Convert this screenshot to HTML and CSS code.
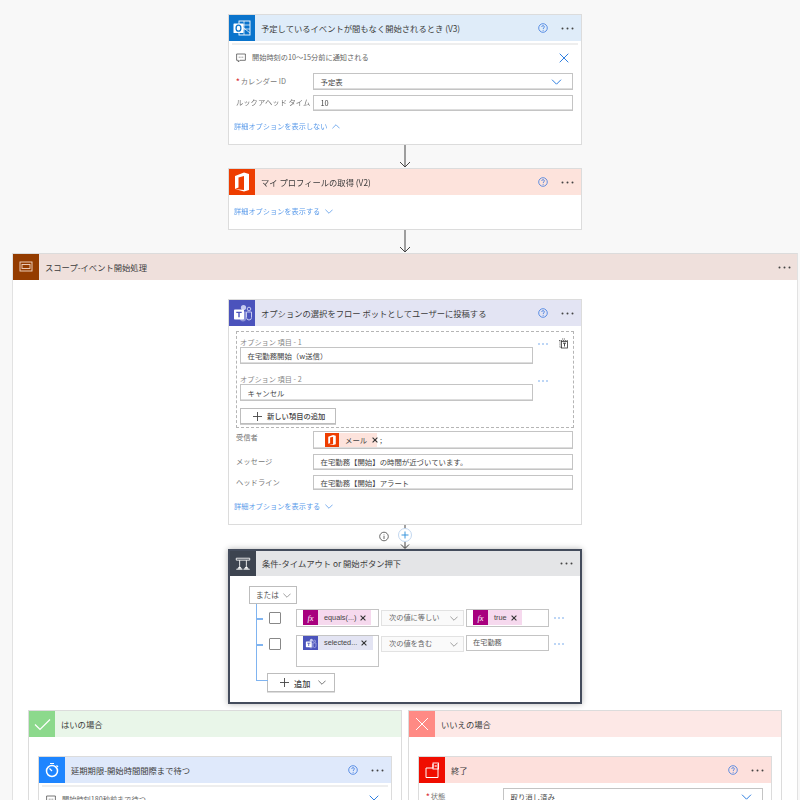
FILE: index.html
```html
<!DOCTYPE html>
<html lang="ja">
<head>
<meta charset="utf-8">
<title>フロー デザイナー</title>
<link rel="stylesheet" href="styles.css">
</head>
<body>
<svg class="defs" width="0" height="0">
  <symbol id="help" viewBox="0 0 10 10"><circle cx="5" cy="5" r="4.3" fill="none" stroke="#3b79e0" stroke-width=".8"/><path d="M3.7 3.9c0-1.7 2.7-1.7 2.7 0 0 1-1.3 1-1.3 2.1" fill="none" stroke="#3b79e0" stroke-width=".8"/><circle cx="5.1" cy="7.3" r=".5" fill="#3b79e0"/></symbol>
  <symbol id="dots" viewBox="0 0 13 3"><circle cx="1.5" cy="1.5" r="1" fill="#444"/><circle cx="6.5" cy="1.5" r="1" fill="#444"/><circle cx="11.5" cy="1.5" r="1" fill="#444"/></symbol>
  <symbol id="bdots" viewBox="0 0 10 2"><circle cx="1" cy="1" r=".7" fill="#4a8fe7"/><circle cx="5" cy="1" r=".7" fill="#4a8fe7"/><circle cx="9" cy="1" r=".7" fill="#4a8fe7"/></symbol>
  <symbol id="chev" viewBox="0 0 10 6"><path d="M.5.7 5 5.2 9.500.7" fill="none" stroke="currentColor" stroke-width="1"/></symbol>
  <symbol id="cross" viewBox="0 0 10 10"><path d="M.7.7l8.600 8.600M9.300.7.700 9.300" fill="none" stroke="currentColor" stroke-width="1"/></symbol>
  <symbol id="x" viewBox="0 0 10 10"><path d="M1 1l8 8M9 1 1 9" fill="none" stroke="#333" stroke-width="1.800"/></symbol>
  <symbol id="plus" viewBox="0 0 10 10"><path d="M5 0v10M0 5h10" fill="none" stroke="currentColor" stroke-width="1"/></symbol>
  <symbol id="note" viewBox="0 0 10 10"><path d="M.6 1h8.800v6.300H4L2.300 9V7.300H.6z" fill="none" stroke="#555" stroke-width=".8"/><path d="M2.800 4.200h.8M4.600 4.200h.8M6.400 4.200h.8" stroke="#555" stroke-width=".9"/></symbol>
  <symbol id="office" viewBox="0 0 26 26"><path d="M6 20V7l9-3.500 5 1.500v16l-5 1.500L6 20l9 1V7l-5.500 1.500V18.500z" fill="#fff"/></symbol>
  <symbol id="teams" viewBox="0 0 26 26"><circle cx="14.500" cy="7.500" r="2.600" fill="#c5c9ef"/><circle cx="20" cy="9" r="1.800" fill="none" stroke="#c5c9ef"/><path d="M17.500 12h5v5.500a2.500 2.500 0 0 1-5 0z" fill="none" stroke="#c5c9ef"/><path d="M11 11.500h6v7a3 3 0 0 1-6 0z" fill="#8d93d8"/><rect x="5" y="9.500" width="10" height="10" rx=".8" fill="#fff"/><path d="M7.300 11.800h5.400v1.300h-2v4.200H9.300v-4.200h-2z" fill="#4b53bc"/></symbol>
</svg>

<main class="canvas">
  <section class="card card-outlook">
    <header class="head head-outlook">
      <div class="ico ico-outlook">
        <svg width="26" height="26" viewBox="0 0 26 26"><rect x="10" y="6" width="11" height="14" fill="none" stroke="#fff" stroke-width=".9"/><path d="M10 10h11M10 14h11M15 6v14M11 10l10 8" stroke="#fff" stroke-width=".7" fill="none"/><rect x="4.500" y="8.500" width="10" height="9.500" rx=".6" fill="#fff"/><ellipse cx="9.500" cy="13.200" rx="2.400" ry="3" fill="none" stroke="#0a74cc" stroke-width="1.300"/></svg>
      </div>
      <h2 class="title">予定しているイベントが間もなく開始されるとき (V3)</h2>
      <svg class="help"><use href="#help"/></svg>
      <svg class="more"><use href="#dots"/></svg>
    </header>
    <div class="body body-outlook">
      <div class="rule"></div>
      <div class="notice">
        <svg class="note"><use href="#note"/></svg>
        <span>開始時刻の10〜15分前に通知される</span>
        <svg class="close"><use href="#cross"/></svg>
      </div>
      <div class="fields fields-outlook">
        <label class="lab"><b>*</b>カレンダー ID</label>
        <div class="inp h18 dd">予定表<svg class="chev-b"><use href="#chev"/></svg></div>
        <label class="lab">ルックアヘッド タイム</label>
        <div class="inp h15">10</div>
      </div>
      <a class="more-link link-a">詳細オプションを表示しない<svg class="chev-l up"><use href="#chev"/></svg></a>
    </div>
  </section>

  <div class="arrow"><svg width="14" height="23" viewBox="0 0 14 23"><path d="M7 0v22M2 17l5 5 5-5" fill="none" stroke="#444" stroke-width="1"/></svg></div>

  <section class="card card-profile">
    <header class="head head-office">
      <div class="ico ico-office"><svg width="26" height="26"><use href="#office"/></svg></div>
      <h2 class="title">マイ プロフィールの取得 (V2)</h2>
      <svg class="help"><use href="#help"/></svg>
      <svg class="more"><use href="#dots"/></svg>
    </header>
    <div class="body body-profile">
      <a class="more-link">詳細オプションを表示する<svg class="chev-l"><use href="#chev"/></svg></a>
    </div>
  </section>

  <div class="arrow"><svg width="14" height="23" viewBox="0 0 14 23"><path d="M7 0v22M2 17l5 5 5-5" fill="none" stroke="#444" stroke-width="1"/></svg></div>

  <section class="scope">
    <header class="head head-scope">
      <div class="ico ico-scope"><svg width="26" height="26" viewBox="0 0 26 26"><rect x="7" y="8" width="12" height="9" fill="none" stroke="#f4d9c8" stroke-width=".9"/><rect x="9" y="10.500" width="8" height="4" fill="none" stroke="#f4d9c8" stroke-width=".9"/></svg></div>
      <h2 class="title">スコープ-イベント開始処理</h2>
      <svg class="more"><use href="#dots"/></svg>
    </header>
    <div class="scope-body">
      <section class="card card-teams">
        <header class="head head-teams">
          <div class="ico ico-teams"><svg width="26" height="26"><use href="#teams"/></svg></div>
          <h2 class="title">オプションの選択をフロー ボットとしてユーザーに投稿する</h2>
          <svg class="help"><use href="#help"/></svg>
          <svg class="more"><use href="#dots"/></svg>
        </header>
        <div class="body body-teams">
          <div class="options">
            <div class="opt">
              <div class="opt-main">
                <span class="opt-lab">オプション 項目 - 1</span>
                <div class="inp h17">在宅勤務開始（w送信）</div>
              </div>
              <svg class="bd bd1"><use href="#bdots"/></svg>
              <svg class="trash" width="11" height="11" viewBox="0 0 11 11"><path d="M1 2.500h9M2 2.500V9.500h2M4 1h3" fill="none" stroke="#444" stroke-width=".8" stroke-dasharray="1.200 .7"/><rect x="3.500" y="3.500" width="6" height="6.500" fill="#fff" stroke="#333" stroke-width=".8"/><path d="M5 5.200h3M6.500 5.200v3.300" stroke="#333" stroke-width=".9"/></svg>
            </div>
            <div class="opt opt2">
              <div class="opt-main">
                <span class="opt-lab">オプション 項目 - 2</span>
                <div class="inp h17">キャンセル</div>
              </div>
              <svg class="bd bd2"><use href="#bdots"/></svg>
            </div>
            <button class="add-item"><svg class="plus-a"><use href="#plus"/></svg>新しい項目の追加</button>
          </div>
          <div class="fields fields-teams">
            <label class="lab lab-top">受信者</label>
            <div class="inp h19 tokens">
              <span class="chip chip-office"><span class="chip-ico bg-office"><svg width="14" height="14" viewBox="0 0 26 26"><use href="#office"/></svg></span><span class="chip-text">メール</span><svg class="chip-x"><use href="#x"/></svg></span><span class="semi">;</span>
            </div>
            <label class="lab">メッセージ</label>
            <div class="inp h16">在宅勤務【開始】の時間が近づいています。</div>
            <label class="lab">ヘッドライン</label>
            <div class="inp h16">在宅勤務【開始】アラート</div>
          </div>
          <a class="more-link link-t">詳細オプションを表示する<svg class="chev-l"><use href="#chev"/></svg></a>
        </div>
      </section>

      <div class="connector">
        <svg width="60" height="24" viewBox="0 0 60 24"><path d="M39 0v23M35 19.500l4 4 4-4" fill="none" stroke="#444" stroke-width="1"/><circle cx="18" cy="11.500" r="4.300" fill="#fff" stroke="#444" stroke-width=".8"/><path d="M18 9.500v.8M18 11v3" stroke="#444" stroke-width=".8"/><circle cx="39" cy="10" r="6.500" fill="#fff" stroke="#c3d8f0"/><path d="M39 6.500v7M35.500 10h7" stroke="#3a96dd" stroke-width="1"/></svg>
      </div>

      <section class="card card-cond">
        <header class="head head-cond">
          <div class="ico ico-cond"><svg width="26" height="25" viewBox="0 0 26 26"><path d="M6 7.500h14v2H6zM9.500 9.500v6M16.500 9.500v6M6 19h6.500M13.500 19H20" fill="none" stroke="#fff" stroke-width=".9"/><path d="M7 18.500l2.500-3 2.500 3zM14 18.500l2.500-3 2.500 3z" fill="#fff"/></svg></div>
          <h2 class="title">条件-タイムアウト or 開始ボタン押下</h2>
          <svg class="more"><use href="#dots"/></svg>
        </header>
        <div class="body body-cond">
          <div class="or-select">または<svg class="chev-g"><use href="#chev"/></svg></div>
          <div class="tree">
            <div class="cond-row">
              <span class="check"></span>
              <div class="box b-left">
                <span class="chip chip-fx"><span class="chip-ico bg-fx"><i class="fx">fx</i></span><span class="chip-text en">equals(...)</span><svg class="chip-x"><use href="#x"/></svg></span>
              </div>
              <div class="select">次の値に等しい<svg class="chev-g"><use href="#chev"/></svg></div>
              <div class="box b-right">
                <span class="chip chip-fx chip-true"><span class="chip-ico bg-fx"><i class="fx">fx</i></span><span class="chip-text en">true</span><svg class="chip-x"><use href="#x"/></svg></span>
              </div>
              <svg class="bd rowdots"><use href="#bdots"/></svg>
            </div>
            <div class="cond-row row-2">
              <span class="check"></span>
              <div class="box b-left b-tall">
                <span class="chip chip-teams"><span class="chip-ico bg-teams"><svg width="15" height="15" viewBox="0 0 26 26"><use href="#teams"/></svg></span><span class="chip-text en">selected...</span><svg class="chip-x"><use href="#x"/></svg></span>
              </div>
              <div class="select">次の値を含む<svg class="chev-g"><use href="#chev"/></svg></div>
              <div class="box b-right b-text">在宅勤務</div>
              <svg class="bd rowdots"><use href="#bdots"/></svg>
            </div>
            <button class="add-cond"><svg class="plus-b"><use href="#plus"/></svg>追加<svg class="chev-g chev-add"><use href="#chev"/></svg></button>
          </div>
        </div>
      </section>

      <div class="branches">
        <section class="branch">
          <header class="head head-yes">
            <div class="ico ico-yes"><svg width="26" height="26" viewBox="0 0 26 26"><path d="M6 13.500l5 5 10-10" fill="none" stroke="#fff" stroke-width="1.200"/></svg></div>
            <h2 class="title">はいの場合</h2>
          </header>
          <div class="branch-body">
            <section class="card">
              <header class="head head-wait">
                <div class="ico ico-wait"><svg width="26" height="26" viewBox="0 0 26 26"><circle cx="13" cy="14" r="5.500" fill="none" stroke="#fff" stroke-width="1.500"/><path d="M11 6.500h4M13 14l-2.500-2.500M17.500 8.500l1.500 1.500" stroke="#fff" stroke-width="1.200" fill="none"/></svg></div>
                <h2 class="title">延期期限-開始時間間際まで待つ</h2>
                <svg class="help"><use href="#help"/></svg>
                <svg class="more"><use href="#dots"/></svg>
              </header>
              <div class="body">
                <div class="rule rule-wait"></div>
                <div class="notice notice-wait">
                  <svg class="note"><use href="#note"/></svg>
                  <span>開始時刻180秒前まで待つ</span>
                  <svg class="close"><use href="#cross"/></svg>
                </div>
              </div>
            </section>
          </div>
        </section>
        <section class="branch">
          <header class="head head-no">
            <div class="ico ico-no"><svg width="26" height="26" viewBox="0 0 26 26"><path d="M7 7l12 12M19 7 7 19" fill="none" stroke="#fff" stroke-width="1"/></svg></div>
            <h2 class="title">いいえの場合</h2>
          </header>
          <div class="branch-body">
            <section class="card">
              <header class="head head-end">
                <div class="ico ico-end"><svg width="26" height="26" viewBox="0 0 26 26"><path d="M7 11v9.500h12V7M7 11h7V7" fill="none" stroke="#fff" stroke-width="1"/><rect x="14" y="6" width="5.500" height="6" fill="none" stroke="#fff" stroke-width=".9"/><path d="M15.700 8l2 2M17.700 8l-2 2" stroke="#fff" stroke-width=".7"/></svg></div>
                <h2 class="title">終了</h2>
                <svg class="help"><use href="#help"/></svg>
                <svg class="more"><use href="#dots"/></svg>
              </header>
              <div class="body body-end">
                <div class="fields fields-end">
                  <label class="lab"><b>*</b>状態</label>
                  <div class="inp h18 dd">取り消し済み<svg class="chev-b"><use href="#chev"/></svg></div>
                </div>
              </div>
            </section>
          </div>
        </section>
      </div>
    </div>
  </section>
</main>
</body>
</html>
```
FILE: styles.css
```css
* { box-sizing: border-box; }
html, body { margin: 0; height: 800px; overflow: hidden; background: #f8f8f8; }
body { font-family: "Noto Sans CJK JP", "Noto Sans", sans-serif; color: #444; font-size: 7.4px; line-height: 1; }
.defs { position: absolute; }
svg { display: block; flex: none; }

.canvas { display: flex; flex-direction: column; align-items: center; width: 810px; padding-top: 14px; filter: blur(.3px); }

.card { width: 354px; background: #fff; border: 1px solid #dcdcdc; flex: none; }
.head { display: flex; align-items: center; height: 26px; }
.ico { width: 26px; height: 26px; flex: none; }
.title { margin: 0 0 0 6px; flex: 1; font-size: 8.3px; font-weight: 400; color: #3c3c3c; white-space: nowrap; }
.help { width: 10px; height: 10px; margin-right: 13px; }
.more { width: 13px; height: 3px; margin-right: 7px; }

.head-outlook { background: #dfecf9; }  .ico-outlook { background: #0a74cc; }
.head-office { background: #fde3dc; }   .ico-office { background: #ee3d00; }
.head-scope { background: #efe0dc; }    .ico-scope { background: #943c00; }
.head-teams { background: #e3e4f3; }    .ico-teams { background: #4b53bc; }
.head-cond { background: #e4e5e7; height: 25px; }  .ico-cond { background: #3d4450; height: 25px; }
.head-yes { background: #e9f6e9; }      .ico-yes { background: #8cd98c; }
.head-no { background: #fde8e6; }       .ico-no { background: #ff8a84; }
.head-wait { background: #dfe9fb; }     .ico-wait { background: #1e85ff; }
.head-end { background: #fde0dc; }      .ico-end { background: #f00d00; }

.rule { height: 2px; margin: 2px 3px 0; background: #eeeeee; }
.notice { display: flex; align-items: center; gap: 6px; margin: 6px 0 0 7px; height: 14px; color: #666; font-size: 7.2px; }
.notice span { flex: 1; }
.note { width: 10px; height: 10px; }
.close { width: 10px; height: 10px; color: #2f7fe0; margin-right: 12px; }

.body-outlook { height: 101px; }
.fields { display: grid; grid-template-columns: 77px 260px; align-items: center; margin-left: 7px; row-gap: 5px; }
.fields-outlook { margin-top: 8px; }
.lab { color: #777; font-size: 7.3px; white-space: nowrap; }
.lab b { color: #d9343a; font-weight: 700; margin-right: 1px; }
.lab-top { align-self: start; padding-top: 3px; }
.inp { display: flex; align-items: center; border: 1px solid #c4c4c4; box-shadow: inset 0 -1px 0 #ddd; padding-left: 6.5px; background: #fff; color: #444; font-size: 7.4px; }
.h15 { height: 15.5px; } .h16 { height: 15.5px; } .h17 { height: 17px; } .h18 { height: 17px; } .h19 { height: 18px; }
.dd { justify-content: space-between; padding-right: 10px; }
.chev-b { width: 11px; height: 6px; color: #2f7fe0; }

.more-link { display: flex; align-items: center; gap: 5px; color: #5b9bea; font-size: 7.2px; margin-left: 5px; }
.link-a { margin-top: 12px; }
.chev-l { width: 8px; height: 5px; color: #5b9bea; }
.up { transform: rotate(180deg); }

.body-profile { height: 34px; padding-top: 13px; }
.arrow { height: 23px; flex: none; }

.scope { width: 786px; flex: none; background: #fff; border-left: 1px solid #e2e2e2; border-right: 1px solid #e2e2e2; border-top: 1px solid #dcdcdc; }
.head-scope .title { margin-left: 6px; }
.head-scope .more { margin-right: 6px; }
.scope-body { display: flex; flex-direction: column; align-items: center; padding-top: 19px; }

.body-teams { height: 198px; padding-top: 5px; }
.options { margin: 0 7px; height: 97px; border: 1px dashed #b5b5b5; padding: 6px 3px 0; }
.opt { display: flex; position: relative; }
.opt2 { margin-top: 11px; }
.opt-main { width: 293px; }
.opt-lab { display: block; color: #888; font-size: 7.2px; height: 9px; line-height: 9px; }
.bd { width: 10px; height: 2px; }
.bd1, .bd2 { margin: 5px 0 0 5px; }
.trash { position: absolute; left: 318px; top: 0; }
.add-item { display: flex; align-items: center; margin-top: 7px; width: 96px; height: 16px; padding: 0 0 0 12px; background: #fff; border: 1px solid #bdbdbd; box-shadow: 0 1px 0 #ccc; font: 500 7.300px "Noto Sans CJK JP", sans-serif; color: #444; }
.plus-a { width: 9px; height: 9px; margin-right: 5px; color: #444; }

.fields-teams { margin-top: 3px; row-gap: 5px; }
.tokens { padding-left: 11px; }
.chip { display: inline-flex; align-items: center; }
.chip-ico { display: flex; align-items: center; justify-content: center; width: 14px; height: 14px; flex: none; }
.chip-text { white-space: nowrap; }
.chip-x { width: 6px; height: 6px; }
.chip-office { width: 52px; height: 14px; background: #fde3dc; }
.chip-office .chip-text { margin: 0 5px 0 6px; }
.semi { margin-left: 3px; }
.bg-office { background: #ee3d00; }
.bg-fx { background: #a8007e; width: 15px; height: 15px; }
.fx { font: italic 8.500px "Liberation Serif", serif; color: #fff; }
.bg-teams { background: #4b53bc; width: 15px; height: 14px; }
.link-t { margin-top: 13px; }

.connector { height: 24px; width: 60px; margin-left: -18px; flex: none; }

.card-cond { border: 2px solid #444c5c; box-shadow: 0 0 6px rgba(0,0,0,.3); height: 155px; position: relative; }
.body-cond { padding: 10px 0 0 19px; }
.or-select { display: flex; align-items: center; justify-content: space-between; width: 48px; height: 18px; padding: 0 5px 0 6px; border: 1px solid #bdbdbd; color: #555; font-size: 7.600px; }
.chev-g { width: 8px; height: 5px; color: #888; }
.tree { margin-left: 7px; padding: 5px 0 0 13px; position: relative; }
.tree::before { content: ""; position: absolute; left: 0; top: 0; height: 76px; width: 11px; border-left: 1.5px solid #80b4f0; border-bottom: 1.5px solid #80b4f0; }
.cond-row { display: flex; align-items: flex-start; position: relative; height: 26px; }
.cond-row::before { content: ""; position: absolute; left: -13px; top: 9px; width: 7px; height: 1.5px; background: #80b4f0; }
.row-2 { height: 38px; }
.check { width: 12px; height: 12px; margin-top: 3px; border: 1px solid #888; border-radius: 1px; background: #fff; flex: none; }
.box { width: 83px; height: 18px; border: 1px solid #c4c4c4; background: #fff; flex: none; }
.b-left { margin-left: 15px; padding-left: 6px; }
.b-right { margin-left: 2px; padding-left: 6px; }
.b-tall { height: 32px; }
.b-text { height: 16px; display: flex; align-items: center; font-size: 7.2px; color: #555; }
.select { display: flex; align-items: center; justify-content: space-between; width: 83px; height: 16px; margin: 1px 0 0 2px; padding: 0 5px 0 7px; background: #fafafa; border: 1px solid #e2e2e2; color: #666; font-size: 7.200px; flex: none; }
.chip-fx { width: 68px; height: 15px; background: #f6d9ee; }
.chip-true { width: 49px; }
.chip-teams { width: 70px; height: 14px; background: #e3e4f3; }
.en { font-family: "Liberation Sans", sans-serif; font-size: 7.300px; margin: 0 4px 0 6px; color: #444; }
.rowdots { margin: 8px 0 0 5px; }
.add-cond { display: flex; align-items: center; width: 68px; height: 19px; margin: 0 0 0 -2px; padding: 0 0 0 12px; background: #fff; border: 1px solid #bdbdbd; box-shadow: 0 1px 0 #ddd; font: 500 8.200px "Noto Sans CJK JP", sans-serif; color: #444; }
.plus-b { width: 9px; height: 9px; margin-right: 5px; }
.chev-add { margin-left: 8px; color: #555; }

.branches { display: flex; gap: 6px; margin-top: 6px; }
.branch { width: 374px; background: #fff; border: 1px solid #dcdcdc; border-bottom: 0; flex: none; }
.branch-body { display: flex; justify-content: center; padding-top: 19px; }
.notice-wait { margin-top: 6px; }
.body-end { padding-top: 5px; height: 40px; }
.fields-end { margin-left: 7px; }
```
